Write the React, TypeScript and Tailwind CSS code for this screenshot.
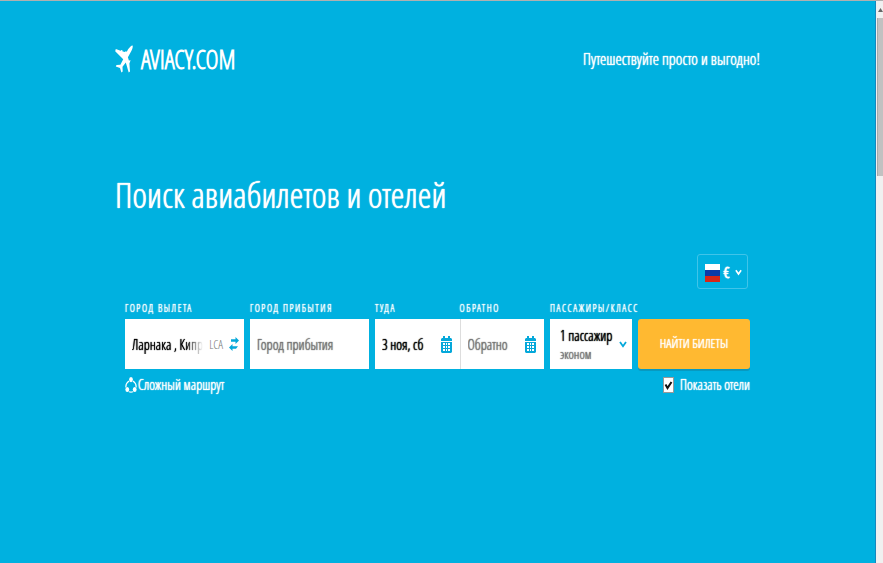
import type { ReactNode } from "react";

function Plane() {
  return (
    <svg viewBox="0 0 18 28" className="h-7 w-[18px]" fill="#fff" aria-hidden="true">
      <path d="M17.600.5c.5 1.500-.2 3.500-1.400 5.800L12.900 12.200l1 3.300 1.700-.2-1.200 3.300.6 8-1.300 1-2.900-10-3.300 4.200.2 4.800-1.300 1-1.400-4.500-4.200-1.600.7-1.600 3.900-.2 2.800-5.500L.2 6.200l.6-2.200 4.800 1.700.9-.7 1 .3-.2 1 2.300.8 1.300-.8.9.4 1.300-2.400C15.200 1.800 16.500.2 17.600.5z" />
    </svg>
  );
}

function Swap() {
  return (
    <svg viewBox="0 0 10 14" className="h-3.5 w-2.5 shrink-0" fill="#05a8da" aria-hidden="true">
      <path d="M2 2.300h4.500V0L10 3.500 6.500 7V4.700H2zM8 9.300H3.500V7L0 10.500 3.500 14v-2.300H7L9 9.300z" />
    </svg>
  );
}

function Calendar() {
  return (
    <svg viewBox="0 0 11 17" className="h-[17px] w-[11px] shrink-0" aria-hidden="true">
      <path fill="#05a8da" d="M2 0h2v2h3V0h2v2h1l1 1v2H0V3l1-1h1zM0 6h11v10l-1 1H1l-1-1z" />
      <path fill="#fff" d="M2 7h2v2H2zM5 7h1v2H5zM7 7h2v2H7zM2 10h2v2H2zM5 10h1v2H5zM7 10h2v2H7zM2 13h2v2H2zM5 13h1v2H5zM7 13h2v2H7z" />
    </svg>
  );
}

function Chevron({ className }: { className: string }) {
  return (
    <svg viewBox="0 0 8 7" className={className} fill="none" stroke="currentColor" strokeWidth="1.8" aria-hidden="true">
      <path d="M1 1l3 4.300L7 1" />
    </svg>
  );
}

function Route() {
  return (
    <svg viewBox="0 0 12 16" className="h-4 w-3" fill="none" stroke="#fff" strokeWidth="1.200" aria-hidden="true">
      <path d="M4 4C1.800 5.500.6 7.500.9 10.500M8 4c2.200 1.500 3.400 3.500 3.100 6.500M4 14.800q2 .8 4 0" />
      <g fill="#fff" stroke="none">
        <ellipse cx="6" cy="2.600" rx="1.900" ry="2.600" />
        <ellipse cx="2.300" cy="12.500" rx="1.900" ry="2.600" />
        <ellipse cx="9.700" cy="12.500" rx="1.900" ry="2.600" />
      </g>
    </svg>
  );
}

function Field({ id, label, children }: { id: string; label: string; children: ReactNode }) {
  return (
    <div className="min-w-0 flex-1">
      <label htmlFor={id} className="block h-5 whitespace-nowrap text-[10px] leading-[18px] tracking-[0.15em] text-white uppercase">
        {label}
      </label>
      <div className="flex h-[50px] items-center bg-white text-[14px] text-black">{children}</div>
    </div>
  );
}

const thick = "[text-shadow:0_0_1px_currentColor,0_0_1px_currentColor]";
const input = "h-full w-full min-w-0 bg-transparent outline-none placeholder:text-[#777] " + thick;

export default function App() {
  return (
    <div className={"flex min-h-screen border-t border-[#b0b0b0] bg-[#00b1e0] font-['Open_Sans_Condensed_Light','Open_Sans_Condensed','Open_Sans',sans-serif] text-white " + thick}>
      <div className="min-w-0 flex-1">
        <div className="mx-auto max-w-[645px]">
          <header className="flex items-center justify-between pt-10">
            <a href="#" className="flex items-center gap-2 text-[25px] leading-9 font-semibold [text-shadow:none]">
              <Plane />
              AVIACY.COM
            </a>
            <p className="text-[16px]">Путешествуйте просто и выгодно!</p>
          </header>
          <h1 className="pt-[94px] text-[35px] leading-12">Поиск авиабилетов и отелей</h1>
          <form className="px-2.5 pt-[35px]" onSubmit={(e) => e.preventDefault()}>
            <div className="flex justify-end pr-0.5">
              <button type="button" aria-label="Валюта" className={"flex h-[35px] w-[51px] items-center justify-center gap-1 rounded-[3px] border border-[#40c4e9] pt-0.5 pl-0.5 text-[14px] font-bold " + thick}>
                <svg viewBox="0 0 15 18" className="h-[18px] w-[15px]" aria-hidden="true">
                  <path fill="#fff" d="M0 0h15v6H0z" />
                  <path fill="#0b3ba7" d="M0 6h15v6H0z" />
                  <path fill="#d62718" d="M0 12h15v6H0z" />
                </svg>
                €
                <Chevron className="ml-0.5 h-[7px] w-[7px]" />
              </button>
            </div>
            <div className="grid grid-cols-[119fr_119fr_169fr_82fr_112fr] items-end gap-1.5 pt-2.5">
              <Field id="from" label="Город вылета">
                <div className="h-full min-w-0 flex-1 overflow-hidden pl-[7px]">
                  <input id="from" defaultValue="Ларнака , Кипр" className={input + " [mask-image:linear-gradient(to_right,#000_75%,transparent)]"} />
                </div>
                <span className="px-1.5 pt-0.5 text-[12px] text-[#777] [text-shadow:none]">LCA</span>
                <button type="button" aria-label="Поменять местами" className="pr-[5px]"><Swap /></button>
              </Field>
              <Field id="to" label="Город прибытия">
                <input id="to" placeholder="Город прибытия" className={input + " px-[7px]"} />
              </Field>
              <div className="flex">
                <Field id="out" label="Туда">
                  <input id="out" defaultValue="3 ноя, сб" className={input + " pl-[7px]"} />
                  <span className="pr-2"><Calendar /></span>
                </Field>
                <Field id="back" label="Обратно">
                  <input id="back" placeholder="Обратно" className={input + " border-l border-[#ddd] pl-[7px]"} />
                  <span className="pr-2"><Calendar /></span>
                </Field>
              </div>
              <Field id="pax" label="Пассажиры/класс">
                <button id="pax" type="button" className={"flex h-full w-full items-center justify-between pr-[5px] pl-2.5 text-left whitespace-nowrap " + thick}>
                  <span>
                    <span className="block leading-5">1 пассажир</span>
                    <span className="block text-[13px] leading-4 text-[#777]">эконом</span>
                  </span>
                  <Chevron className="h-[7px] w-2 text-[#05a8da]" />
                </button>
              </Field>
              <button type="submit" className={"h-[50px] rounded-[3px] bg-[#ffb931] text-[13px] whitespace-nowrap shadow-[0_2px_0_#0899c0] " + thick}>НАЙТИ БИЛЕТЫ</button>
            </div>
            <div className="flex items-center justify-between pt-1.5 text-[14px] leading-5">
              <a href="#" className="flex items-center gap-px"><Route />Сложный маршрут</a>
              <label className="flex items-center gap-1.5">
                <span className="grid">
                  <input type="checkbox" defaultChecked className="peer col-start-1 row-start-1 h-4 w-[11px] appearance-none border border-[#999] bg-white" />
                  <svg viewBox="0 0 11 16" className="pointer-events-none col-start-1 row-start-1 hidden h-4 w-[11px] peer-checked:block" fill="none" stroke="#111" strokeWidth="2" aria-hidden="true">
                    <path d="M2.500 7.500l2 3.500 4-6" />
                  </svg>
                </span>
                Показать отели
              </label>
            </div>
          </form>
        </div>
      </div>
      <div className="w-2 border-l border-[#1787bd] bg-[#f0f0f0] pl-px" aria-hidden="true">
        <div className="flex h-[17px] items-center justify-center">
          <svg viewBox="0 0 5 4" className="h-1 w-[5px]" fill="#666"><path d="M2.500 0L5 4H0z" /></svg>
        </div>
        <div className="h-[158px] border-l border-[#aaa] bg-[#c1c1c1]" />
      </div>
    </div>
  );
}
